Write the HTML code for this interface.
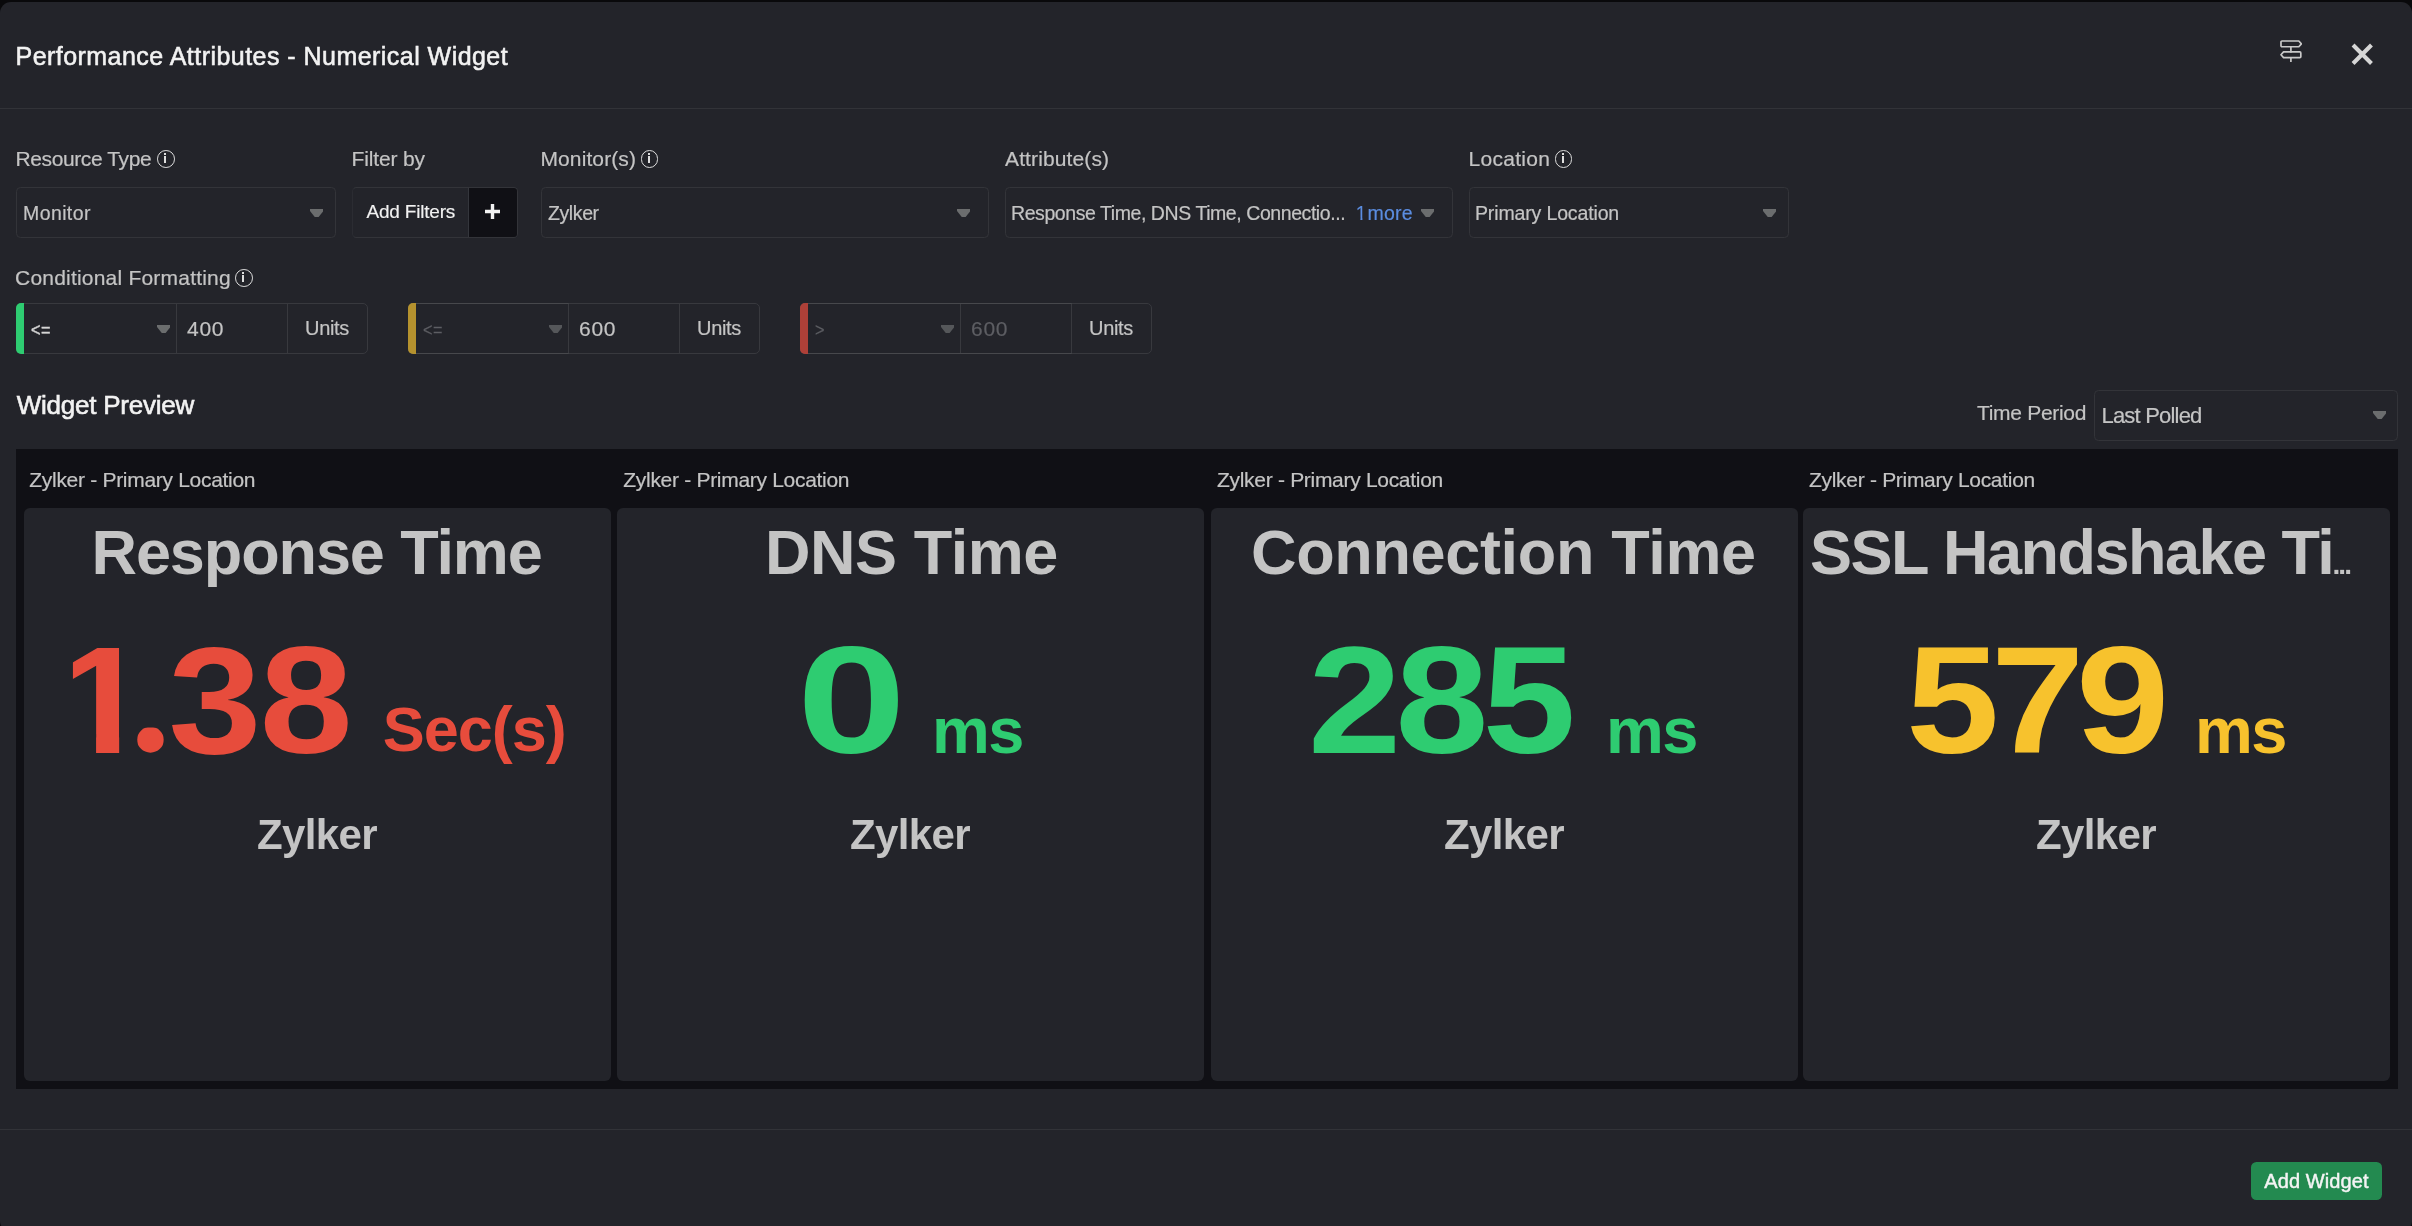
<!DOCTYPE html>
<html lang="en">
<head>
<meta charset="utf-8">
<title>Performance Attributes - Numerical Widget</title>
<style>
*{box-sizing:border-box;margin:0;padding:0}
html,body{width:2412px;height:1226px;overflow:hidden;background:#09090b}
body{font-family:"Liberation Sans",sans-serif;color:#c6c6c6;position:relative;-webkit-text-stroke:0.2px}
.modal{will-change:transform;position:absolute;left:0;top:2px;width:2412px;height:1230px;background:#23242a;border-radius:11px}
.abs{position:absolute;white-space:nowrap}
.hdr{position:absolute;left:0;top:0;width:2412px;height:107px;border-bottom:1px solid #323338}
.title{left:15.5px;top:38px;font-size:25px;line-height:32px;color:#f2f2f2;letter-spacing:0.46px;-webkit-text-stroke:0.55px #f2f2f2}
.lbl{font-size:21px;line-height:26px;color:#c4c4c4}
.sel{position:absolute;height:51px;border:1px solid #333439;border-radius:4.5px;background:#23242a}
.sel .txt{position:absolute;left:7px;top:12px;font-size:19.5px;line-height:26px;color:#c4c4c4;white-space:nowrap;letter-spacing:-0.3px}
.caret{position:absolute;width:13.4px;height:8.2px;background:#6b6d6e;clip-path:polygon(0 0,100% 0,100% 24%,63% 100%,37% 100%,0 24%)}
.info{display:inline-block;box-sizing:border-box;width:17.8px;height:17.8px;border:1.9px solid #dedede;border-radius:50%;position:relative;vertical-align:-1.6px;margin-left:5.6px;letter-spacing:0}
.info:before{content:"";position:absolute;left:6px;top:5.3px;width:2px;height:7.3px;background:#dedede}
.info:after{content:"";position:absolute;left:6px;top:1.9px;width:2px;height:2px;background:#dedede}
.cf{position:absolute;top:301px;width:352px;height:51px;border:1px solid #38393e;border-radius:5px}
.cf .dis{position:absolute;left:-1px;top:-1px;height:51px;border:1px solid #47484c;border-radius:5px 0 0 5px}
.cf .bar{position:absolute;left:-1px;top:-1px;width:8px;height:51px;border-radius:5px 0 0 5px}
.cf .d1{position:absolute;left:159px;top:0;width:1px;height:49px;background:#38393e}
.cf .d2{position:absolute;left:270px;top:0;width:1px;height:49px;background:#38393e}
.cf .op{position:absolute;left:14px;top:13px;font-size:18.5px;line-height:26px;letter-spacing:0.5px;transform:scaleX(0.88);transform-origin:0 50%}
.cf .val{position:absolute;left:170px;top:12px;font-size:21px;line-height:26px;letter-spacing:0.7px}
.cf .un{position:absolute;left:288px;top:11px;font-size:20px;line-height:26px;color:#c4c4c4;letter-spacing:-0.3px}
.prev{position:absolute;left:16px;top:447px;width:2382px;height:640px;background:#101015}
.ct{position:absolute;top:18px;font-size:21px;line-height:26px;color:#c4c4c4;letter-spacing:-0.3px;white-space:nowrap}
.card{-webkit-text-stroke:0;position:absolute;top:59px;width:587px;height:573px;background:#23242a;border-radius:6px;overflow:hidden}
.card .h{position:absolute;top:6px;font-weight:bold;font-size:63px;line-height:76px;color:#c4c4c4;white-space:nowrap}
.card .v{position:absolute;left:0;top:0;width:100%;height:0;font-weight:bold;white-space:nowrap}
.card .v .n{position:absolute;top:107px;font-size:153px;line-height:170px;transform-origin:0 50%;transform:scaleX(1.097)}
.card .v .u{position:absolute;top:184.5px;font-size:65px;line-height:76px}
.card .m{position:absolute;top:301.5px;font-weight:bold;font-size:42px;line-height:50px;color:#c4c4c4;letter-spacing:-0.64px;white-space:nowrap}
.one{display:inline-block;line-height:1;clip-path:polygon(0.0947em 0,0.3713em 0,0.3713em 1em,0.2328em 1em,0.2328em 0.725em,0.0947em 0.725em)}
.dot{display:inline-block;line-height:1;clip-path:ellipse(0.0712em 0.0752em at 0.1385em 0.772em);transform:scale(1.12);transform-origin:0.1385em 0.8465em}
.one2{display:inline-block;line-height:1;margin-left:2px;clip-path:polygon(0 0,0.346em 0,0.346em 1em,0.244em 1em,0.244em 0.70em,0 0.70em)}
.red{color:#e74c3c}.grn{color:#2ecc71}.yel{color:#f7c22d}
.ftr{position:absolute;left:0;top:1127px;width:2412px;height:1px;background:#323338}
.btn{position:absolute;left:2251px;top:1160px;width:131px;height:38px;border-radius:5.5px;background:#238a50;color:#f4f4f4;font-size:20px;line-height:39px;-webkit-text-stroke:0.45px;text-align:center;letter-spacing:0.1px}
</style>
</head>
<body>
<div class="modal">
  <div class="hdr">
    <div class="abs title" id="title">Performance Attributes - Numerical Widget</div>
    <svg class="abs" id="icosign" style="left:2278.6px;top:36.6px" width="23.8" height="23.8" viewBox="0 0 24 24" fill="none" stroke="#c9c9c9" stroke-width="1.7" stroke-linejoin="round" stroke-linecap="round">
      <path d="M3 2h17l2.6 2.9L20 7.8H3a1 1 0 0 1-1-1V3a1 1 0 0 1 1-1z"/>
      <path d="M21 13H4.6L2 15.9l2.6 2.9H21a1 1 0 0 0 1-1V14a1 1 0 0 0-1-1z"/>
      <path d="M12 8v5M12 19v4"/>
    </svg>
    <svg class="abs" id="icoclose" style="left:2350.5px;top:40.65px" width="22.5" height="22.5" viewBox="0 0 22 22" stroke="#d6d6d6" stroke-width="4" fill="none">
      <path d="M2 2L20 20M20 2L2 20"/>
    </svg>
  </div>

  <div class="abs lbl" style="left:15.5px;top:144px"><span id="l1" style="letter-spacing:-0.39px">Resource Type</span><span class="info" id="i1"></span></div>
  <div class="abs lbl" style="left:351.5px;top:144px"><span id="l2" style="letter-spacing:-0.15px">Filter by</span></div>
  <div class="abs lbl" style="left:540.5px;top:144px"><span id="l3" style="letter-spacing:0.1px">Monitor(s)</span><span class="info" style="margin-left:4.5px"></span></div>
  <div class="abs lbl" style="left:1005px;top:144px"><span id="l4" style="letter-spacing:0.12px">Attribute(s)</span></div>
  <div class="abs lbl" style="left:1468.5px;top:144px"><span id="l5" style="letter-spacing:0.3px">Location</span><span class="info" style="margin-left:4.3px"></span></div>

  <div class="sel" style="left:16px;top:185px;width:320px"><div class="txt" id="s1" style="left:6px;letter-spacing:0.4px">Monitor</div><div class="caret" style="left:293px;top:21px"></div></div>
  <div class="sel" style="left:352px;top:185px;width:166px;overflow:hidden;border-left-color:#2b2c32">
    <div class="txt" id="s2" style="left:13.5px;top:11px;font-size:19px;letter-spacing:-0.2px;color:#f2f2f2;-webkit-text-stroke:0.15px #f2f2f2">Add Filters</div>
    <div class="abs" style="left:115px;top:0;width:50px;height:49px;background:#101015;border-left:1px solid #34363c"></div>
    <svg class="abs" id="icoplus" style="left:132px;top:16px" width="15" height="15" viewBox="0 0 15 15" stroke="#f2f2f2" stroke-width="3.4"><path d="M7.5 0v15M0 7.5h15"/></svg>
  </div>
  <div class="sel" style="left:541px;top:185px;width:448px"><div class="txt" id="s3" style="left:6px;letter-spacing:-0.4px">Zylker</div><div class="caret" style="left:415px;top:21px"></div></div>
  <div class="sel" style="left:1005px;top:185px;width:448px"><div class="txt" style="left:5px"><span id="s4" style="letter-spacing:-0.43px">Response Time, DNS Time, Connectio...</span> <span id="s4b" aria-label="1 more" style="color:#5b8de0;margin-left:3.4px;letter-spacing:0.25px;word-spacing:-5px"><span class="one2">1</span> more</span></div><div class="caret" style="left:415px;top:21px"></div></div>
  <div class="sel" style="left:1469px;top:185px;width:320px"><div class="txt" id="s5" style="left:5px;letter-spacing:-0.14px">Primary Location</div><div class="caret" style="left:293px;top:21px"></div></div>

  <div class="abs lbl" style="left:15px;top:263px"><span id="l6" style="letter-spacing:0.21px">Conditional Formatting</span><span class="info" style="margin-left:4.2px"></span></div>

  <div class="cf" style="left:16px"><div class="bar" style="background:#2ecc71"></div><div class="op" id="op1" style="color:#d6d6d6;-webkit-text-stroke:0.4px">&lt;=</div><div class="caret" style="left:140px;top:21px"></div><div class="d1"></div><div class="val" id="v1" style="color:#c4c4c4">400</div><div class="d2"></div><div class="un" id="un1">Units</div></div>
  <div class="cf" style="left:408px"><div class="dis" style="width:161px"></div><div class="bar" style="background:#b5922e"></div><div class="op" style="color:#5d5e63">&lt;=</div><div class="caret" style="left:140px;top:21px;background:#55575a"></div><div class="d1"></div><div class="val" style="color:#c4c4c4">600</div><div class="d2"></div><div class="un">Units</div></div>
  <div class="cf" style="left:800px"><div class="dis" style="width:272px"></div><div class="dis" style="width:161px;border-color:transparent #47484c transparent transparent;border-radius:0"></div><div class="bar" style="background:#ae4038"></div><div class="op" style="color:#5d5e63">&gt;</div><div class="caret" style="left:140px;top:21px;background:#55575a"></div><div class="d1"></div><div class="val" style="color:#5d5e63">600</div><div class="d2"></div><div class="un">Units</div></div>

  <div class="abs" id="wp" style="left:16.8px;top:386.5px;font-size:26px;line-height:32px;color:#f2f2f2;letter-spacing:-0.25px;-webkit-text-stroke:0.6px #f2f2f2">Widget Preview</div>
  <div class="abs lbl" id="tp" style="left:1977px;top:398px;letter-spacing:-0.3px">Time Period</div>
  <div class="sel" style="left:2094px;top:388px;width:304px"><div class="txt" id="lp" style="font-size:22px;top:12px;left:6.5px;letter-spacing:-0.8px">Last Polled</div><div class="caret" style="left:278px;top:20px"></div></div>

  <div class="prev">
    <div class="ct" id="ct1" style="left:13.3px">Zylker - Primary Location</div>
    <div class="ct" id="ct2" style="left:607.3px">Zylker - Primary Location</div>
    <div class="ct" id="ct3" style="left:1201px">Zylker - Primary Location</div>
    <div class="ct" id="ct4" style="left:1793px">Zylker - Primary Location</div>

    <div class="card" style="left:8px"><div class="h" id="h1" style="left:67.5px;letter-spacing:-1.1px">Response Time</div><div class="v red"><span class="n" id="n1" aria-label="1.38" style="left:33px"><span class="one" style="letter-spacing:-20.86px">1</span><span class="dot" style="letter-spacing:-5.43px">.</span><span style="letter-spacing:-1.84px">3</span>8</span><span class="u" id="u1" style="left:358.7px;letter-spacing:-1px;font-size:63px;top:182.5px">Sec(s)</span></div><div class="m" id="m1" style="left:233px">Zylker</div></div>
    <div class="card" style="left:601px"><div class="h" id="h2" style="left:148px;letter-spacing:-0.44px">DNS Time</div><div class="v grn"><span class="n" id="n2" style="left:180px;transform:scaleX(1.28)">0</span><span class="u" id="u2" style="letter-spacing:-1.6px;left:315px">ms</span></div><div class="m" id="m2" style="left:233px">Zylker</div></div>
    <div class="card" style="left:1195px"><div class="h" id="h3" style="left:40px;letter-spacing:-0.34px">Connection Time</div><div class="v grn"><span class="n" id="n3" style="left:97px;letter-spacing:-5.6px">285</span><span class="u" id="u3" style="letter-spacing:-1.6px;left:395px">ms</span></div><div class="m" id="m3" style="left:233px">Zylker</div></div>
    <div class="card" style="left:1787px"><div class="h" id="h4" style="left:7px"><span id="h4t" style="letter-spacing:-1.5px">SSL Handshake Ti</span><span id="ell" style="font-size:28px;letter-spacing:-1.8px;margin-left:-1px">...</span></div><div class="v yel"><span class="n" id="n4" style="left:103px;letter-spacing:-7.65px">579</span><span class="u" id="u4" style="letter-spacing:-1.6px;left:392px">ms</span></div><div class="m" id="m4" style="left:233px">Zylker</div></div>
  </div>

  <div class="ftr"></div>
  <div class="btn"><span id="btn">Add Widget</span></div>
</div>
</body>
</html>
